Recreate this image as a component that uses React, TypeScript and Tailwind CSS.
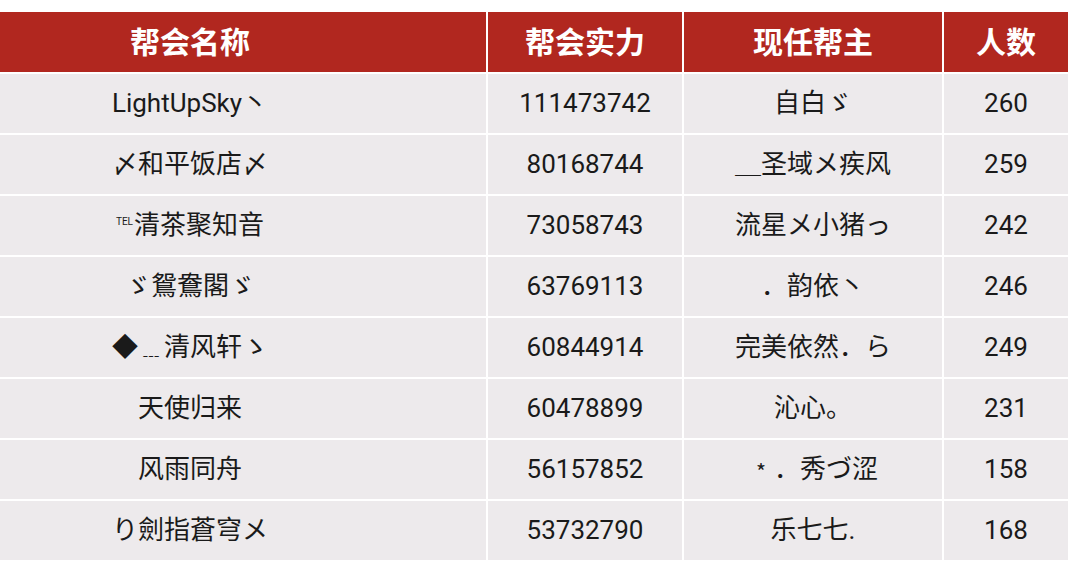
import type { ReactNode } from 'react';

const rows: { name: ReactNode; power: string; leader: string; count: string }[] = [
  { name: 'LightUpSky丶', power: '111473742', leader: '自白ゞ', count: '260' },
  { name: '〆和平饭店〆', power: '80168744', leader: '＿圣域メ疾风', count: '259' },
  {
    name: (
      <span>
        <span className="text-[10px] align-[9px] mr-[1px]">TEL</span>清茶聚知音
      </span>
    ),
    power: '73058743',
    leader: '流星メ小猪っ',
    count: '242',
  },
  { name: 'ゞ鴛鴦閣ゞ', power: '63769113', leader: '．韵依丶', count: '246' },
  { name: '◆﹍清风轩ゝ', power: '60844914', leader: '完美依然．ら', count: '249' },
  { name: '天使归来', power: '60478899', leader: '沁心。', count: '231' },
  { name: '风雨同舟', power: '56157852', leader: '﹡．秀づ涩', count: '158' },
  { name: 'り劍指蒼穹メ', power: '53732790', leader: '乐七七.', count: '168' },
];

const headers = ['帮会名称', '帮会实力', '现任帮主', '人数'];

export default function App() {
  return (
    <div
      className="w-[1070px] h-[563px] overflow-hidden bg-white pt-3 pr-[2px]"
      style={{ fontFamily: 'Roboto, "Noto Sans CJK SC", sans-serif' }}
    >
      <div className="grid grid-cols-[486px_194px_258px_124px] gap-[2px] bg-white">
        {headers.map((h, i) => (
          <div
            key={h}
            className={`h-[60px] flex items-center justify-center bg-[#b1271f] text-white text-[30px] font-bold ${
              i === 0 ? 'pr-[106px]' : ''
            }`}
          >
            {h}
          </div>
        ))}
        {rows.map((r) => (
          <div key={r.power} className="contents">
            <div className="h-[59px] flex items-center justify-center pr-[106px] bg-[#edeaec] text-[#1a1a1a] text-[26px]">
              {r.name}
            </div>
            <div className="h-[59px] flex items-center justify-center bg-[#edeaec] text-[#1a1a1a] text-[26px]">
              {r.power}
            </div>
            <div className="h-[59px] flex items-center justify-center bg-[#edeaec] text-[#1a1a1a] text-[26px]">
              {r.leader}
            </div>
            <div className="h-[59px] flex items-center justify-center bg-[#edeaec] text-[#1a1a1a] text-[26px]">
              {r.count}
            </div>
          </div>
        ))}
      </div>
    </div>
  );
}
